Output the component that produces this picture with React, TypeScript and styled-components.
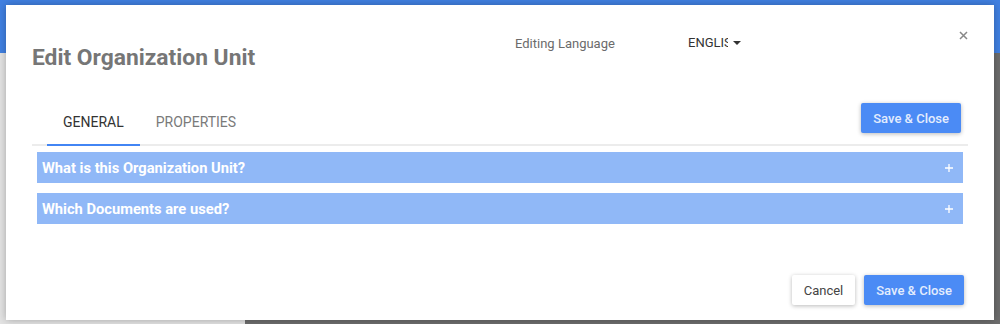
import styled, { createGlobalStyle } from "styled-components";

const GlobalStyle = createGlobalStyle`
  html, body {
    margin: 0;
    padding: 0;
  }
  body {
    font-family: Roboto, "Liberation Sans", Arial, sans-serif;
    width: 1000px;
    height: 324px;
    overflow: hidden;
  }
`;

const Page = styled.div`
  position: relative;
  width: 1000px;
  height: 324px;
  display: grid;
  grid-template-rows: 53px 1fr;
  grid-template-columns: 245px 1fr;
`;

const TopBar = styled.div`
  grid-column: 1 / -1;
  background: #4080e2;
`;

const SidePane = styled.div`
  background: #e3e3e3;
`;

const MainPane = styled.div`
  background: #6d6d6d;
`;

const Modal = styled.div`
  position: absolute;
  left: 6px;
  top: 5px;
  width: 988px;
  height: 315px;
  box-sizing: border-box;
  padding: 0 26px 15px;
  background: #fff;
  box-shadow: 0 0 8px rgba(0, 0, 0, 0.28);
  display: flex;
  flex-direction: column;
`;

const Header = styled.div`
  height: 95px;
  display: grid;
  grid-template-columns: 483px 173px 1fr auto;
  align-items: start;
`;

const Title = styled.h2`
  margin: 40px 0 0;
  font-size: 22.8px;
  line-height: 26px;
  font-weight: 700;
  color: #767676;
  white-space: nowrap;
`;

const LangLabel = styled.div`
  margin-top: 31px;
  font-size: 13px;
  line-height: 16px;
  color: #6b6b6b;
`;

const LangSelect = styled.div`
  margin-top: 30px;
  display: flex;
  align-items: center;
  gap: 5px;
  cursor: pointer;
`;

const LangValue = styled.span`
  width: 40px;
  overflow: hidden;
  white-space: nowrap;
  font-size: 13px;
  line-height: 16px;
  color: #333;
`;

const Caret = styled.span`
  width: 0;
  height: 0;
  border-left: 4px solid transparent;
  border-right: 4px solid transparent;
  border-top: 4px solid #333;
`;

const CloseButton = styled.button`
  margin-top: 26px;
  padding: 0;
  border: none;
  background: none;
  width: 9px;
  height: 9px;
  display: flex;
  cursor: pointer;
`;

const TabRow = styled.div`
  display: flex;
  align-items: flex-start;
  border-bottom: 2px solid #ececec;
  height: 44px;
`;

const Tabs = styled.div`
  display: flex;
  margin-left: 15px;
`;

const Tab = styled.div<{ $active?: boolean }>`
  height: 44px;
  padding: 0 16px;
  display: flex;
  align-items: center;
  font-size: 14px;
  text-transform: uppercase;
  color: ${(p) => (p.$active ? "#333" : "#7a7a7a")};
  border-bottom: 2px solid ${(p) => (p.$active ? "#4285f4" : "transparent")};
  cursor: pointer;
`;

const Button = styled.button<{ $primary?: boolean }>`
  height: 30px;
  padding: 0 12px;
  border: none;
  border-radius: 2px;
  font-family: inherit;
  font-size: 13px;
  font-weight: ${(p) => (p.$primary ? 500 : 400)};
  background: ${(p) => (p.$primary ? "#4b8bf5" : "#fff")};
  color: ${(p) => (p.$primary ? "#e4edfd" : "#444")};
  box-shadow: 0 1px 4px rgba(0, 0, 0, 0.28);
  cursor: pointer;
`;

const TopSave = styled(Button)`
  margin: 3px 7px 0 auto;
`;

const Accordion = styled.div`
  margin: 6px 5px 0;
  display: flex;
  flex-direction: column;
  gap: 10px;
`;

const Panel = styled.div`
  height: 31px;
  box-sizing: border-box;
  padding: 0 10px 0 5px;
  display: flex;
  align-items: center;
  justify-content: space-between;
  background: #90b8f7;
  color: #fff;
  font-size: 14.7px;
  font-weight: 700;
  cursor: pointer;
`;

const Footer = styled.div`
  margin-top: auto;
  margin-right: 4px;
  display: flex;
  justify-content: flex-end;
  gap: 9px;
`;

const panels = ["What is this Organization Unit?", "Which Documents are used?"];

export default function App() {
  return (
    <>
      <GlobalStyle />
      <Page>
        <TopBar />
        <SidePane />
        <MainPane />
        <Modal>
          <Header>
            <Title>Edit Organization Unit</Title>
            <LangLabel>Editing Language</LangLabel>
            <LangSelect>
              <LangValue>ENGLISH</LangValue>
              <Caret />
            </LangSelect>
            <CloseButton aria-label="Close">
              <svg width="9" height="9" viewBox="0 0 9 9">
                <path d="M1 1L8 8M8 1L1 8" stroke="#888" strokeWidth="1.5" />
              </svg>
            </CloseButton>
          </Header>
          <TabRow>
            <Tabs>
              <Tab $active>General</Tab>
              <Tab>Properties</Tab>
            </Tabs>
            <TopSave $primary>Save &amp; Close</TopSave>
          </TabRow>
          <Accordion>
            {panels.map((title) => (
              <Panel key={title}>
                <span>{title}</span>
                <svg width="8" height="8" viewBox="0 0 8 8">
                  <path d="M4 0V8M0 4H8" stroke="#fff" strokeWidth="1.3" />
                </svg>
              </Panel>
            ))}
          </Accordion>
          <Footer>
            <Button>Cancel</Button>
            <Button $primary>Save &amp; Close</Button>
          </Footer>
        </Modal>
      </Page>
    </>
  );
}
